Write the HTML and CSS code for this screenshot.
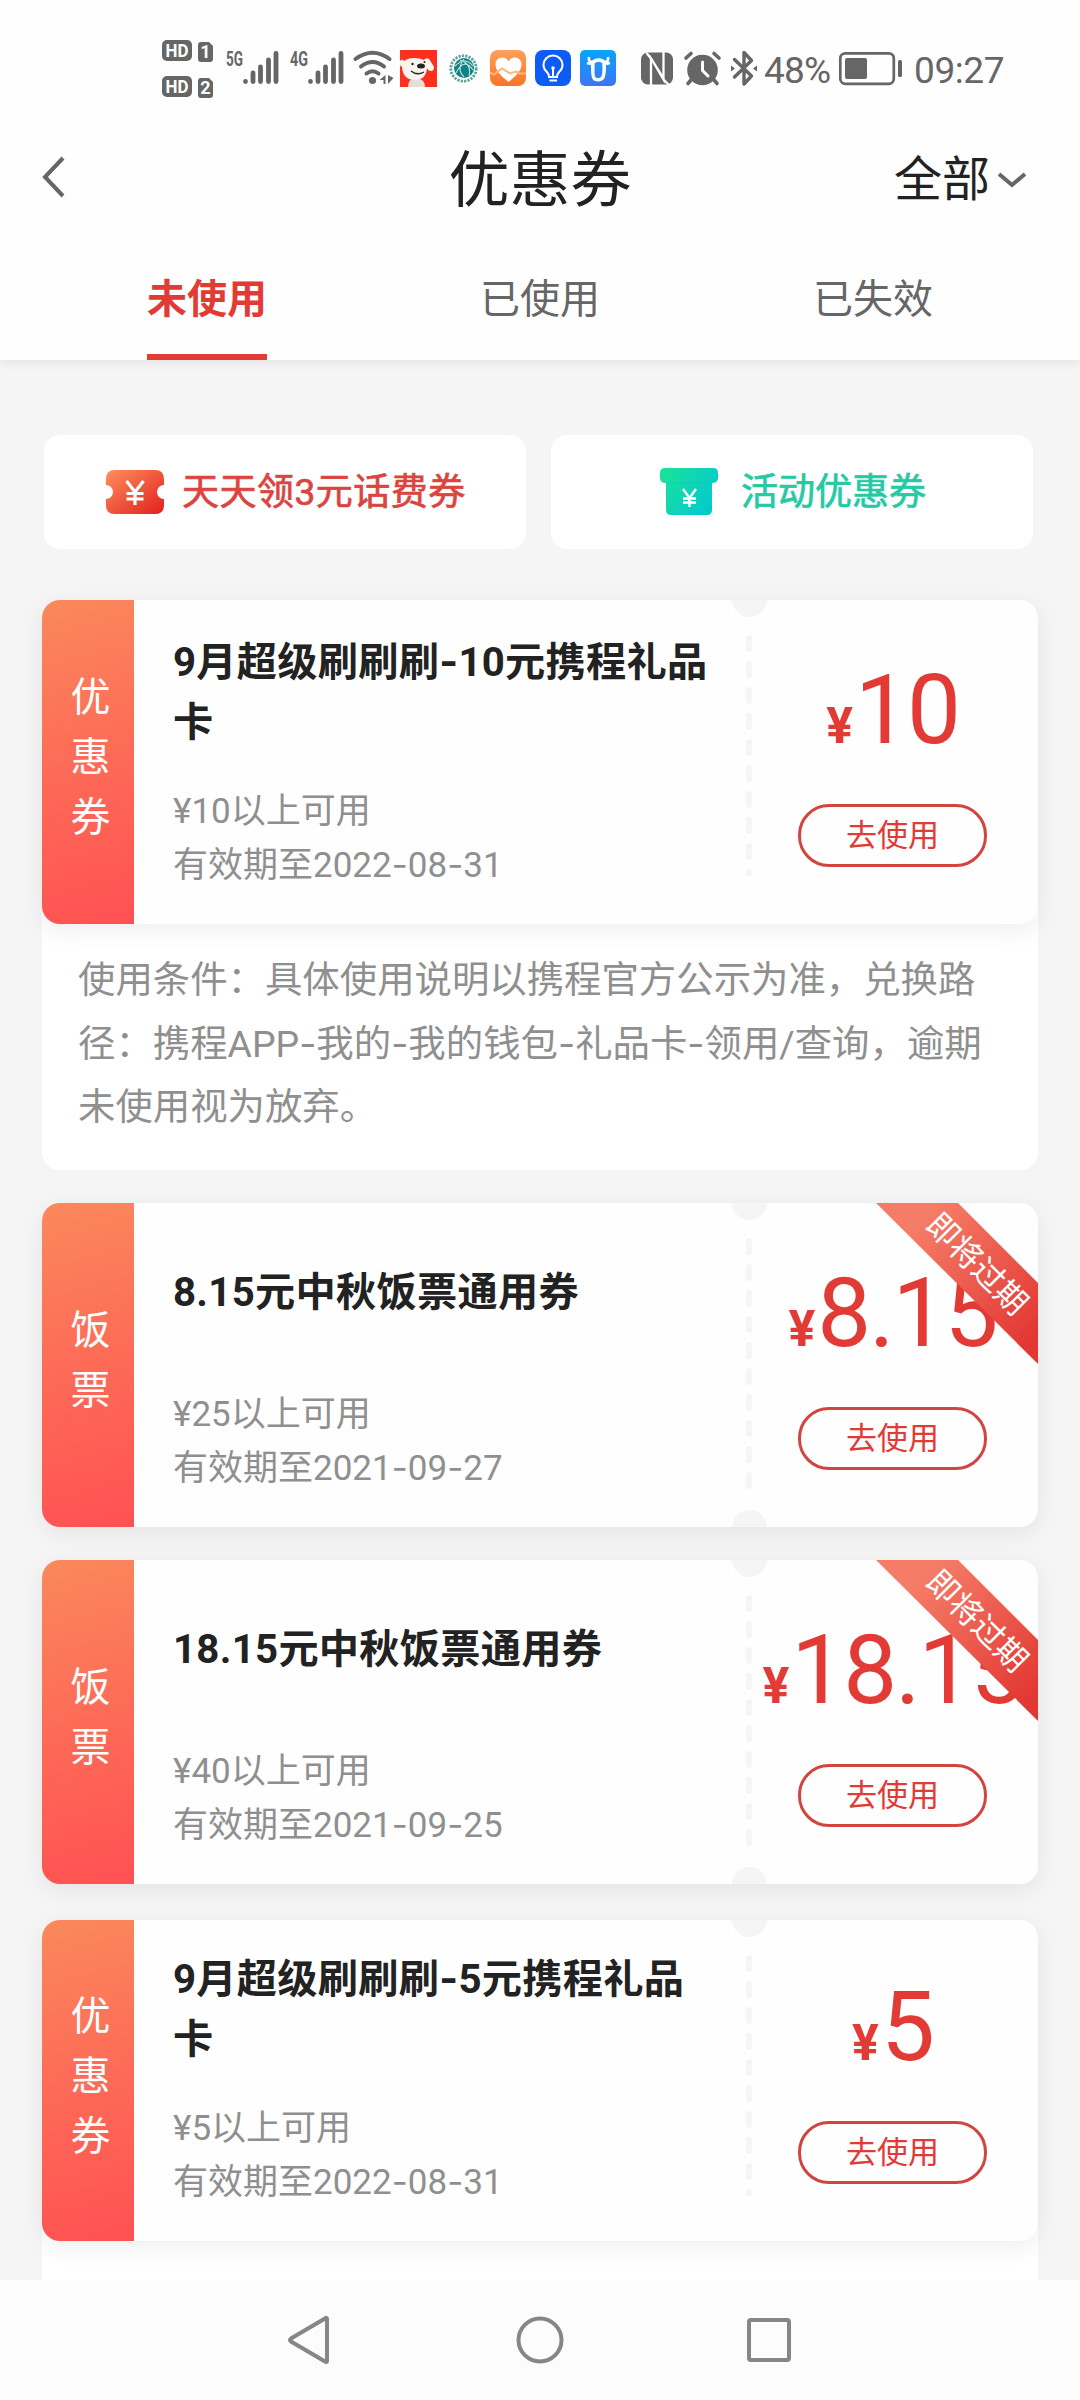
FILE: index.html
```html
<!DOCTYPE html>
<html lang="zh-CN">
<head>
<meta charset="utf-8">
<title>优惠券</title>
<link rel="stylesheet" href="styles.css">
</head>
<body>
<div class="page">
  <header class="header">
    <div class="status">
      <svg width="58" height="64" viewBox="162 36 58 64">
        <g fill="#666"><rect x="162" y="40" width="30" height="21" rx="5"/><rect x="162" y="76" width="30" height="21" rx="5"/>
        <path d="M201 42h8l4 4v13a3 3 0 0 1-3 3h-9a3 3 0 0 1-3-3V45a3 3 0 0 1 3-3zM201 78h8l4 4v13a3 3 0 0 1-3 3h-9a3 3 0 0 1-3-3V81a3 3 0 0 1 3-3z"/></g>
        <g class="badge-text"><text x="177" y="57" textLength="23" lengthAdjust="spacingAndGlyphs">HD</text><text x="177" y="93" textLength="23" lengthAdjust="spacingAndGlyphs">HD</text><text x="205.500" y="58">1</text><text x="205.500" y="94">2</text></g>
      </svg>
      <svg width="65" height="64" viewBox="220 36 65 64">
        <text class="net" x="226" y="66" textLength="17" lengthAdjust="spacingAndGlyphs">5G</text>
        <path class="bars" d="M245.500 81.500v.1M253 73v8.500M260.500 67v14.500M268.500 60v21.500M276 53.500v28"/>
      </svg>
      <svg width="65" height="64" viewBox="285 36 65 64">
        <text class="net" x="290" y="66" textLength="18" lengthAdjust="spacingAndGlyphs">4G</text>
        <path class="bars" d="M310.500 81.500v.1M318 73v8.500M325.500 67v14.500M333.500 60v21.500M341 53.500v28"/>
      </svg>
      <svg width="48" height="64" viewBox="350 36 48 64">
        <path d="M355.500 59Q372.500 46.500 389.500 59M361 66.500Q372.500 57.500 384 66.500M366.500 73.500Q372.500 69 378.500 73.500" fill="none" stroke="#666" stroke-width="4" stroke-linecap="round"/>
        <circle cx="372.500" cy="80.500" r="3.600" fill="#666"/><path d="M385.500 75v9h-2v-4h-4zM388 75v9l5.500-6z" fill="#666"/>
      </svg>
      <svg width="44" height="64" viewBox="398 36 44 64">
        <rect x="400" y="50" width="37" height="37" fill="#fd301d"/>
        <path d="M408 87q0-6 4-8h8q5 2 5 8z" fill="#e5ddda"/><path d="M400 61q2-3 4 0 4-3 10-3 6 0 10 2 2-3 5-1 3 4 5 8 0 4-3 4-3 0-4-3-1 12-12 12-12 0-13-13-3-1-2-6z" fill="#f8f3ef"/>
        <ellipse cx="421" cy="66" rx="4" ry="2.500" fill="#222"/><circle cx="412.500" cy="64" r="1.200" fill="#222"/><circle cx="424.500" cy="62" r="1" fill="#222"/><path d="M411 71q6 5 13 1" fill="none" stroke="#222" stroke-width="1.300"/>
      </svg>
      <svg width="46" height="64" viewBox="442 36 46 64">
        <circle cx="463.500" cy="68.500" r="12.700" fill="none" stroke="#5ba29f" stroke-width="2.800" stroke-dasharray="2.200 1.200"/><circle cx="464" cy="68" r="10" fill="#118282"/>
        <path d="M455 66q10-10 18 0M456 73q8-16 17-3M464 59q-8 10 0 18M460 60q12 4 9 16" fill="none" stroke="#bfe3e0" stroke-width="1.100"/>
      </svg>
      <svg width="45" height="64" viewBox="488 36 45 64">
        <defs><linearGradient id="health" x2="0" y2="1"><stop stop-color="#ff9f5c"/><stop offset="1" stop-color="#fa7424"/></linearGradient></defs>
        <rect x="490" y="50" width="36" height="36" rx="8" fill="url(#health)"/><path d="M508.500 82q-13-10-13-17 0-7.500 7-7.500 4 0 6 4 2-4 6-4 7 0 7 7.500 0 7-13 17z" fill="#fff"/><path d="M490 72.500l4 2 8-6 8 5 6-2 4 2h6" fill="none" stroke="#ffb67c" stroke-width="2"/>
      </svg>
      <svg width="45" height="64" viewBox="533 36 45 64">
        <rect x="535" y="50" width="36" height="36" rx="8" fill="#0d5cf6"/><path d="M549 77q0-3-2.500-5.500-3-2.500-3-6.500a9.500 9.500 0 0 1 19 0q0 4-3 6.500-2.500 2.500-2.500 5.500zM549.500 80.500h7.500M553 76v-7" fill="none" stroke="#fff" stroke-width="2"/><circle cx="553" cy="68" r="1.800" fill="#fff"/>
      </svg>
      <svg width="61" height="64" viewBox="578 36 61 64">
        <defs><linearGradient id="ox" x2="0" y2="1"><stop stop-color="#06a6f9"/><stop offset="1" stop-color="#3f74f4"/></linearGradient></defs>
        <rect x="580" y="50" width="36" height="36" rx="5" fill="url(#ox)"/><path d="M593 62q-1 16 2 17 3 1.500 6 0 4-1 3-17-5-4-11 0z" fill="none" stroke="#fff" stroke-width="3.600"/><path d="M589 57q-1 5 4 5.500M608 57q1 5-4 5.500M587 63l4 1M610 63l-4 1" fill="none" stroke="#fff" stroke-width="2.600"/>
      </svg>
      <svg width="39" height="64" viewBox="639 36 39 64">
        <rect x="641" y="52.500" width="32" height="32" rx="7" fill="#666"/><path d="M651 85V58.500l13 20.500M663.500 52v27.500l-12-20.500M651 58.500l-4.500-5.500M663.500 79.500l5 5" fill="none" stroke="#fff" stroke-width="2.300"/>
      </svg>
      <svg width="47" height="64" viewBox="678 36 47 64">
        <circle cx="702.500" cy="70" r="15.300" fill="#666"/><path d="M686 58l5-4.500M719 58l-5-4.500M691 80l-3 3.500M714 80l3 3.500" stroke="#666" stroke-width="3.600" stroke-linecap="round"/><path d="M702.500 62v8.500l5.500 5.500" fill="none" stroke="#fff" stroke-width="3" stroke-linecap="round"/>
      </svg>
      <svg width="38" height="64" viewBox="725 36 38 64">
        <path d="M734.500 59.500l17 16.500-7.500 8V52.500l7.500 8-17 16.500" fill="none" stroke="#666" stroke-width="3.400" stroke-linejoin="round" stroke-linecap="round"/><path d="M731 65.500v6l4-3zM757 65.500v6l-4-3z" fill="#666"/>
      </svg>
      <span class="percent">48%</span>
      <svg width="78" height="64" viewBox="836 36 78 64">
        <rect x="840.300" y="53.300" width="53.500" height="30.500" rx="5" fill="none" stroke="#666" stroke-width="2.700"/><rect x="845" y="58" width="22" height="21" rx="2" fill="#666"/><rect x="898" y="60" width="4" height="17" rx="1.500" fill="#666"/>
      </svg>
      <span class="clock">09:27</span>
    </div>
    <div class="titlebar">
      <svg class="back" width="26" height="44" viewBox="0 0 26 44"><path d="M23 3L5 22l18 19"/></svg>
      <h1>优惠券</h1>
      <div class="filter">全部<svg width="32" height="20" viewBox="0 0 32 20"><path d="M3 4l13 11L29 4"/></svg></div>
    </div>
    <nav class="tabs"><div class="tab active"><span>未使用</span></div><div class="tab"><span>已使用</span></div><div class="tab"><span>已失效</span></div></nav>
  </header>

  <main>
    <div class="entries">
      <div class="entry red">
        <svg width="58" height="44" viewBox="0 0 58 44"><defs><linearGradient id="er" x2="1" y2="1"><stop stop-color="#ff8f5c"/><stop offset="1" stop-color="#e0201f"/></linearGradient></defs><path d="M9 0h40q9 0 9 9v6a7 7 0 0 0 0 14v6q0 9-9 9H9q-9 0-9-9v-6a7 7 0 0 0 0-14V9q0-9 9-9z" fill="url(#er)"/><path d="M20.500 11l8.500 11 8.500-11M29 22v13M20.500 23.500h17M20.500 29h17" fill="none" stroke="#fff" stroke-width="3.200"/></svg>
        <span>天天领3元话费券</span>
      </div>
      <div class="entry green">
        <svg width="58" height="48" viewBox="0 0 58 48"><defs><linearGradient id="eg" x2="1" y2=".5"><stop stop-color="#1be495"/><stop offset="1" stop-color="#05cacd"/></linearGradient></defs><path d="M5 0h48q5 0 5 5v5q0 5-6 5v27q0 5-5 5H11q-5 0-5-5V15q-6 0-6-5V5q0-5 5-5z" fill="url(#eg)"/><path d="M6 15h46" stroke="#09c9a6" stroke-opacity=".35" stroke-width="1"/><path d="M23 21l6.500 9 6.500-9M29.500 30v9M23 30.500h13M23 34.500h13" fill="none" stroke="#fff" stroke-width="2.400"/></svg>
        <span>活动优惠券</span>
      </div>
    </div>

    <section class="coupon open">
      <article class="card">
        <div class="kind">优<br>惠<br>券</div>
        <div class="info"><h2><span>9月超级刷刷刷<i>-</i>10元携程礼品<br>卡</span></h2><p>¥10以上可用<br>有效期至2022<i>-</i>08<i>-</i>31</p></div>
        <div class="worth"><div class="price"><b>¥</b>10</div><div class="use">去使用</div></div>
      </article>
      <p class="terms">使用条件：具体使用说明以携程官方公示为准，兑换路<br>径：携程APP<i>-</i>我的<i>-</i>我的钱包<i>-</i>礼品卡<i>-</i>领用/查询，逾期<br>未使用视为放弃。</p>
    </section>

    <section class="coupon">
      <article class="card notched">
        <div class="kind">饭<br>票</div>
        <div class="info"><h2><span>8.15元中秋饭票通用券</span></h2><p>¥25以上可用<br>有效期至2021<i>-</i>09<i>-</i>27</p></div>
        <div class="worth"><div class="price"><b>¥</b>8.15</div><div class="use">去使用</div></div>
        <div class="ribbon"><span>即将过期</span></div>
      </article>
    </section>

    <section class="coupon">
      <article class="card notched">
        <div class="kind">饭<br>票</div>
        <div class="info"><h2><span>18.15元中秋饭票通用券</span></h2><p>¥40以上可用<br>有效期至2021<i>-</i>09<i>-</i>25</p></div>
        <div class="worth"><div class="price"><b>¥</b>18.15</div><div class="use">去使用</div></div>
        <div class="ribbon"><span>即将过期</span></div>
      </article>
    </section>

    <section class="coupon open last">
      <article class="card short">
        <div class="kind">优<br>惠<br>券</div>
        <div class="info"><h2><span>9月超级刷刷刷<i>-</i>5元携程礼品<br>卡</span></h2><p>¥5以上可用<br>有效期至2022<i>-</i>08<i>-</i>31</p></div>
        <div class="worth"><div class="price"><b>¥</b>5</div><div class="use">去使用</div></div>
      </article>
    </section>
  </main>

  <footer class="sysnav">
    <svg width="50" height="56" viewBox="0 0 50 56"><path d="M42 7v42q0 2-2 .5L6 29.500q-2-1.500 0-3L40 6.500q2-1.500 2 .5z"/></svg>
    <svg width="56" height="56" viewBox="0 0 56 56"><circle cx="28" cy="28" r="21.500"/></svg>
    <svg width="56" height="56" viewBox="0 0 56 56"><rect x="8" y="8" width="40" height="40" rx="2"/></svg>
  </footer>
</div>
</body>
</html>
```
FILE: styles.css
```css
* { box-sizing: border-box; margin: 0; padding: 0; }
body { background: #f5f5f5; font-family: Roboto, "Noto Sans CJK SC", sans-serif; color: #222; }
i { font-family: Inter, sans-serif; font-style: normal; }
.page { width: 1080px; height: 2400px; display: flex; flex-direction: column; overflow: hidden; }

.header { height: 360px; flex: none; background: #fefefe; box-shadow: 0 2px 10px rgba(0,0,0,.08); }
.status { height: 120px; padding: 36px 0 0 162px; display: flex; align-items: flex-start; color: #666; font-size: 37px; line-height: 69px; white-space: nowrap; }
.status svg { flex: none; }
.percent { width: 73px; letter-spacing: -.8px; padding-left: 1px; }
.clock { letter-spacing: -.4px; }
.badge-text { fill: #fff; font-size: 18px; font-weight: 700; text-anchor: middle; }
.net { fill: #666; font-size: 20px; font-weight: 700; }
.bars { fill: none; stroke: #666; stroke-width: 4.800px; stroke-linecap: round; }

.titlebar { height: 118px; padding: 0 52px 0 40px; display: grid; grid-template-columns: 1fr auto 1fr; align-items: center; }
.titlebar path { fill: none; stroke: #666; stroke-width: 4px; }
.back { margin-top: -4px; }
h1 { font-size: 61px; font-weight: 400; line-height: 90px; padding: 4px 0 0 12px; }
.filter { display: flex; justify-content: flex-end; align-items: center; gap: 6px; font-size: 48px; line-height: 70px; padding-top: 2px; }
.tabs { height: 122px; padding: 0 40.500px; display: flex; }
.tab { flex: 1; display: flex; justify-content: center; font-size: 40px; line-height: 60px; color: #666; }
.tab span { padding-top: 32px; }
.tab.active span { color: #e23a34; font-weight: 700; border-bottom: 6px solid #e23a34; }

main { flex: 1; min-height: 0; overflow: hidden; padding: 75px 42px 0; }
.entries { display: grid; grid-template-columns: 1fr 1fr; gap: 25px; padding: 0 5px 0 2px; margin-bottom: 51px; }
.entry { height: 114px; background: #fff; border-radius: 16px; display: flex; align-items: center; font-size: 37px; line-height: 54px; }
.entry span { padding-top: 2px; }
.red { color: #dc4440; padding-left: 62px; gap: 18px; letter-spacing: .5px; -webkit-text-stroke: .7px #dc4440; }
.green { color: #25caa4; padding-left: 109px; gap: 23px; -webkit-text-stroke: .7px #25caa4; }

.coupon { margin-bottom: 33px; border-radius: 18px; }
.open { background: #fff; }
.card { position: relative; height: 324px; display: grid; grid-template-columns: 92px 1fr 291px; background: #fefefe; border-radius: 18px; overflow: hidden; box-shadow: 0 6px 24px rgba(0,0,0,.07); }
.kind { padding: 0 0 8px 5px; display: flex; align-items: center; justify-content: center; background: linear-gradient(165deg, #fb885c, #fd6b57 50%, #ff5152); color: #fff; font-size: 40px; line-height: 60px; }
.info { padding: 32px 0 0 39px; white-space: nowrap; }
h2 { height: 120px; display: flex; align-items: center; font-size: 40.200px; line-height: 60px; font-weight: 700; letter-spacing: .3px; }
.notched h2 { height: 115px; }
.info p { margin-top: 33px; font-size: 35px; line-height: 53px; color: #8f8f8f; }
.notched .info p { margin-top: 38px; }
.worth { position: relative; display: flex; flex-direction: column; align-items: center; color: #e23a34; padding-top: 54px; }
/* perforation between the description and the amount */
.worth::before { content: ""; position: absolute; left: -1px; top: 35px; width: 6px; height: 241px; background: radial-gradient(circle at 3px 3px, #f5f5f5 2.800px, transparent 3.200px) 0 0 / 6px 26px, radial-gradient(circle at 3px 14px, #f5f5f5 2.800px, transparent 3.200px) 0 0 / 6px 26px, linear-gradient(transparent 3px, #f5f5f5 3px 14px, transparent 14px) 0 0 / 6px 26px; }
.notched .worth::before { height: 252px; }
.worth::after { content: ""; position: absolute; left: -15.500px; top: -18px; width: 35px; height: 35px; border-radius: 50%; background: #f5f5f5; }
.notched .worth::after { box-shadow: 0 325px #f5f5f5; }
.price { height: 110px; line-height: 113px; font-size: 96px; letter-spacing: -2px; white-space: nowrap; }
.price b { font-size: 50px; letter-spacing: 0; margin-right: 2px; }
.use { margin-top: 40px; width: 189px; height: 63px; flex: none; border: 3px solid #d14540; border-radius: 31px; text-align: center; font-size: 31px; line-height: 57px; }
.ribbon { position: absolute; right: 0; top: 0; width: 162px; height: 161px; background: linear-gradient(135deg, #f57c67 20%, #e23833 90%); clip-path: polygon(0 0, 82px 0, 100% 80px, 100% 100%); color: #fff; font-size: 32px; line-height: 40px; }
.ribbon span { position: absolute; left: 37px; top: 41px; width: 128px; transform: rotate(45deg); }
.terms { padding: 25px 0 0 36px; height: 246px; font-size: 37.400px; line-height: 63px; color: #8f8f8f; white-space: nowrap; }
.coupon.last { margin-top: 36px; height: 400px; }
.short { height: 321px; }
.short .info { padding-top: 29px; }
.short .worth { padding-top: 51px; }

.sysnav { height: 120px; flex: none; background: #fcfcfc; display: flex; align-items: center; padding-left: 285px; }
.sysnav svg { fill: none; stroke: #868686; stroke-width: 4px; }
.sysnav svg + svg { margin-left: 177px; }
.sysnav svg:last-child { margin-left: 173px; }
```
